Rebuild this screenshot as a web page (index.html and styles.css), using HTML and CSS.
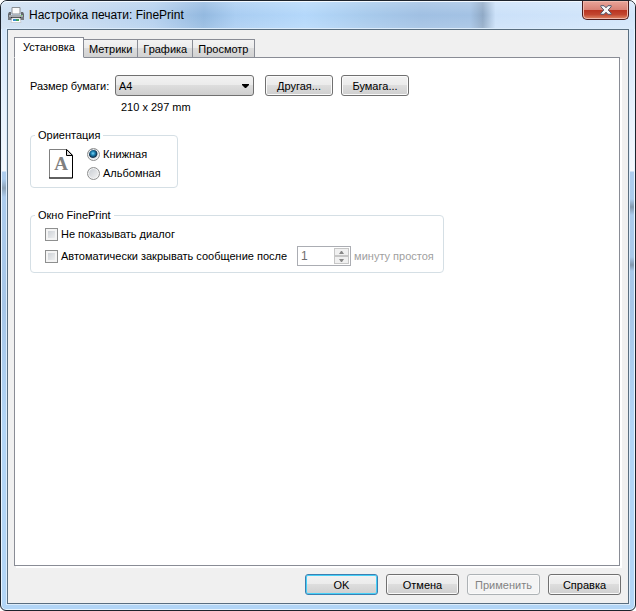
FILE: index.html
```html
<!DOCTYPE html>
<html lang="ru">
<head>
<meta charset="utf-8">
<title>Настройка печати: FinePrint</title>
<link rel="stylesheet" href="styles.css">
</head>
<body>
<div class="window">
  <header class="titlebar">
    <svg class="printer" viewBox="0 0 16 16" width="16" height="16" aria-hidden="true">
      <path d="M4 .5h8V7H4z" fill="#fafafa" stroke="#8b8f94"/>
      <path d="M1 5h2v3h10V5h2l1 2v6H0V7z" fill="#66696e"/>
      <path d="M1 8h14v2H1z" fill="#a9acb0"/>
      <path d="M0 10h16v3H0z" fill="#777a7f"/>
      <path d="M3 10h10v1H3z" fill="#2e3135"/>
      <path d="M4 11h8l1 4.500H3z" fill="#fff" stroke="#b9bcc0" stroke-width=".6"/>
      <path d="M5 12h3v2H5z" fill="#3c8fd0"/><path d="M8 12h3v2H8z" fill="#41a25b"/>
      <path d="M13 8h1v1h-1z" fill="#6ee06a"/>
    </svg>
    <h1 class="title">Настройка печати: FinePrint</h1>
    <button class="close" type="button" aria-label="Закрыть">
      <svg viewBox="0 0 12 10" width="12" height="10" aria-hidden="true">
        <path d="M.8.7h3.3L6 2.8 7.9.7h3.3v1L8.2 5l3 3.3v1H7.9L6 7.2 4.1 9.3H.8v-1l3-3.3-3-3.3z" fill="#f7f7f7" stroke="#52576a"/>
      </svg>
    </button>
  </header>

  <form class="client">
    <nav class="tabs" role="tablist">
      <button class="tab tab-active" type="button" role="tab" aria-selected="true">Установка</button>
      <button class="tab" type="button" role="tab">Метрики</button>
      <button class="tab" type="button" role="tab">Графика</button>
      <button class="tab" type="button" role="tab">Просмотр</button>
    </nav>

    <main class="panel">
      <div class="paper">
        <label class="paper-label" for="size">Размер бумаги:</label>
        <div class="combo">
          <select id="size"><option>A4</option></select>
          <svg class="arrow" viewBox="0 0 7 4" width="7" height="4" aria-hidden="true"><path d="M0 0h7v1L4 4H3L0 1z"/></svg>
        </div>
        <button class="button" type="button">Другая...</button>
        <button class="button" type="button">Бумага...</button>
        <output class="dimensions" for="size">210 x 297 mm</output>
      </div>

      <fieldset class="group orientation">
        <legend>Ориентация</legend>
        <div class="orientation-body">
          <svg class="page" viewBox="0 0 25 30" width="25" height="30" aria-hidden="true">
            <path d="M.5.5H18L23.500 6v23H.5z" fill="#fff" stroke="#808080"/>
            <path d="M17.500.5v6h6" fill="#ddd" stroke="#000"/>
            <path d="M17.500.5l6 6v22.500H0" fill="none" stroke="#000"/>
            <text x="12" y="21" text-anchor="middle" class="page-letter">A</text>
          </svg>
          <div class="radios">
            <label class="choice"><input type="radio" name="orientation" checked>Книжная</label>
            <label class="choice"><input type="radio" name="orientation">Альбомная</label>
          </div>
        </div>
      </fieldset>

      <fieldset class="group dialog-options">
        <legend>Окно FinePrint</legend>
        <label class="choice"><input type="checkbox">Не показывать диалог</label>
        <div class="timeout">
          <label class="choice"><input type="checkbox">Автоматически закрывать сообщение после</label>
          <div class="spin">
            <input id="minutes" type="text" value="1" disabled>
            <div class="spin-buttons">
              <button type="button" disabled aria-label="Больше"><svg viewBox="0 0 5 3" width="5" height="3"><path d="M0 3h5L3 0H2z"/></svg></button>
              <button type="button" disabled aria-label="Меньше"><svg viewBox="0 0 5 3" width="5" height="3"><path d="M0 0h5L3 3H2z"/></svg></button>
            </div>
          </div>
          <label class="unit" for="minutes">минуту простоя</label>
        </div>
      </fieldset>
    </main>

    <footer class="actions">
      <button class="button button-default" type="submit">OK</button>
      <button class="button" type="button">Отмена</button>
      <button class="button" type="button" disabled>Применить</button>
      <button class="button" type="button">Справка</button>
    </footer>
  </form>
</div>
</body>
</html>
```
FILE: styles.css
```css
* { box-sizing: border-box; }

body {
  margin: 0;
  background: #fff;
  color: #000;
  font: 11px/14px "Liberation Sans", Arial, sans-serif;
}

button, input, select { font: inherit; color: inherit; }

.window {
  display: flex;
  flex-direction: column;
  min-height: 100vh;
  padding: 0 6px 6px;
  border: 1px solid #1d232c;
  border-radius: 7px 7px 6px 6px;
  box-shadow: inset 0 0 0 1px #e8f4ff;
  background:
    linear-gradient(#d3e6fb 30px, #e8f2fd 110px, #f4f8fd 170px, transparent 171px),
    linear-gradient(transparent 178px, #8da3b8 187px, transparent 196px) left / 50% 100% no-repeat,
    linear-gradient(transparent 198px, #8197ad 206px, transparent 214px, transparent 256px, #8197ad 264px, transparent 270px) right / 50% 100% no-repeat,
    linear-gradient(#b7d7f7, #a6c6e8 50%, #b2d5f6 70%);
}

.titlebar {
  display: flex;
  align-items: center;
  height: 28px;
  margin: 0 -6px;
  padding: 0 6px 0 7px;
  border-radius: 6px 6px 0 0;
  box-shadow: inset 0 1px #f3f9ff;
  background:
    linear-gradient(#ffffff33, #ffffff00 50%, #ffffff22),
    linear-gradient(90deg, #cfe0f2, #c6daf0 12%, #b4d0ee 24%, #93b9e0 32%, #a9cdf2 37%, #b4d8fb 48%, #a8cbed 57%, #a0c0e3 66%, #a3c2e4 74%, #8fa9c6 76%, #cbe1f9 78%, #d3e6fb);
}

.title {
  flex: 1;
  margin: 0 0 0 5px;
  font-size: 12px;
  line-height: 16px;
  font-weight: 400;
}

.close {
  display: grid;
  place-items: center;
  align-self: flex-start;
  width: 47px;
  height: 19px;
  padding: 0;
  border: 1px solid #4b1c1c;
  border-top: 0;
  border-radius: 0 0 5px 5px;
  box-shadow: inset 0 0 0 1px #f0b8ac;
  background: linear-gradient(#e9a59a, #d98276 48%, #b93320 50%, #c24630 75%, #e08a68);
}

.client {
  flex: 1;
  display: flex;
  flex-direction: column;
  padding: 7px 8px 8px 6px;
  border: 1px solid #596e80;
  background: #f0f0f0;
  box-shadow: 0 0 0 1px #dcecfb;
}

.tabs { display: flex; align-items: flex-end; height: 21px; }

.tab {
  height: 19px;
  margin-left: -1px;
  padding: 0 5px;
  border: 1px solid #898c95;
  background: linear-gradient(#f3f3f3, #ebebeb 48%, #dcdcdc 50%, #d2d2d2);
  white-space: nowrap;
}

.tab-active {
  position: relative;
  height: 21px;
  margin-left: 0;
  padding: 0 8px 2px;
  border-bottom-color: #fff;
  background: #fff;
}

.panel {
  flex: 1;
  margin-top: -1px;
  padding: 17px 15px;
  border: 1px solid #898c95;
  background: #fff;
  box-shadow: 2px 2px #fff;
}

.paper {
  display: grid;
  grid-template-columns: 85px minmax(60px, 150px) 76px 68px;
  align-items: center;
}

.paper .button { width: 68px; }
.paper-label { white-space: nowrap; }

.combo { position: relative; margin-right: 11px; }

.combo select {
  display: block;
  appearance: none;
  width: 100%;
  height: 21px;
  padding: 0 20px 0 3px;
  border: 1px solid #707070;
  border-radius: 3px;
  background: linear-gradient(#f2f2f2, #ebebeb 48%, #dddddd 50%, #cfcfcf);
}

.arrow { position: absolute; right: 5px; top: 9px; pointer-events: none; }

.dimensions { grid-column: 2 / -1; margin: 4px 0 0 6px; }

.button {
  width: 73px;
  height: 21px;
  padding: 0;
  border: 1px solid #707070;
  border-radius: 3px;
  box-shadow: inset 0 0 0 1px #fafafa;
  background: linear-gradient(#f2f2f2, #ebebeb 48%, #dddddd 50%, #cfcfcf);
}

.button-default { border-color: #3c7fb1; box-shadow: inset 0 0 0 1px #46d0f8; }

.button:disabled {
  border-color: #adb2b5;
  background: #f4f4f4;
  color: #838383;
}

.group {
  min-width: 0;
  margin: 0;
  padding: 5px 14px 6px;
  border: 1px solid #d5dfe5;
  border-radius: 4px;
}

.group legend { margin-left: -10px; padding: 0 3px; }

.orientation { width: 148px; margin-top: 14px; padding: 5px 18px 7px; }
.orientation legend { margin-left: -14px; }
.orientation-body { display: flex; align-items: center; gap: 13px; }
.page { flex: none; }
.page-letter { font: bold 19px "Liberation Serif", serif; fill: #808080; }
.radios { display: grid; gap: 5px; }

.choice { display: flex; align-items: center; gap: 3px; white-space: nowrap; }

.choice input {
  flex: none;
  appearance: none;
  width: 13px;
  height: 13px;
  margin: 0;
  border: 1px solid #8e8f8f;
  background: linear-gradient(135deg, #c5cad0, #f6f6f6);
  box-shadow: inset 0 0 0 2px #f4f4f4;
}

.choice input[type="radio"] { border-radius: 50%; box-shadow: inset 0 0 0 1px #f4f4f4; }

.choice input[type="radio"]:checked {
  background: radial-gradient(circle at 45% 40%, #7fd4f5 0, #1b83b4 2px, #12304c 4px, #dfe5ea 5px);
}

.dialog-options { width: 414px; max-width: 100%; margin-top: 20px; }
.timeout { display: flex; align-items: center; margin-top: 5px; }

.spin {
  display: flex;
  width: 54px;
  height: 20px;
  margin-left: 10px;
  padding: 1px;
  border: 1px solid #abadb3;
  background: #fff;
}

.spin input {
  flex: 1;
  min-width: 0;
  padding: 0 2px;
  border: 0;
  background: none;
  color: #6d6d6d;
  font-size: 12px;
}

.spin-buttons { display: grid; width: 15px; grid-template-rows: 1fr 1fr; }

.spin-buttons button {
  display: grid;
  place-items: center;
  min-height: 0;
  padding: 0;
  border: 1px solid #c6c6c6;
  background: #f0f0f0;
}

.spin-buttons path { fill: #888; }

.unit { margin-left: 3px; color: #a0a0a0; white-space: nowrap; }

.actions { display: flex; justify-content: flex-end; gap: 8px; margin: 8px -1px 0 0; }
```
